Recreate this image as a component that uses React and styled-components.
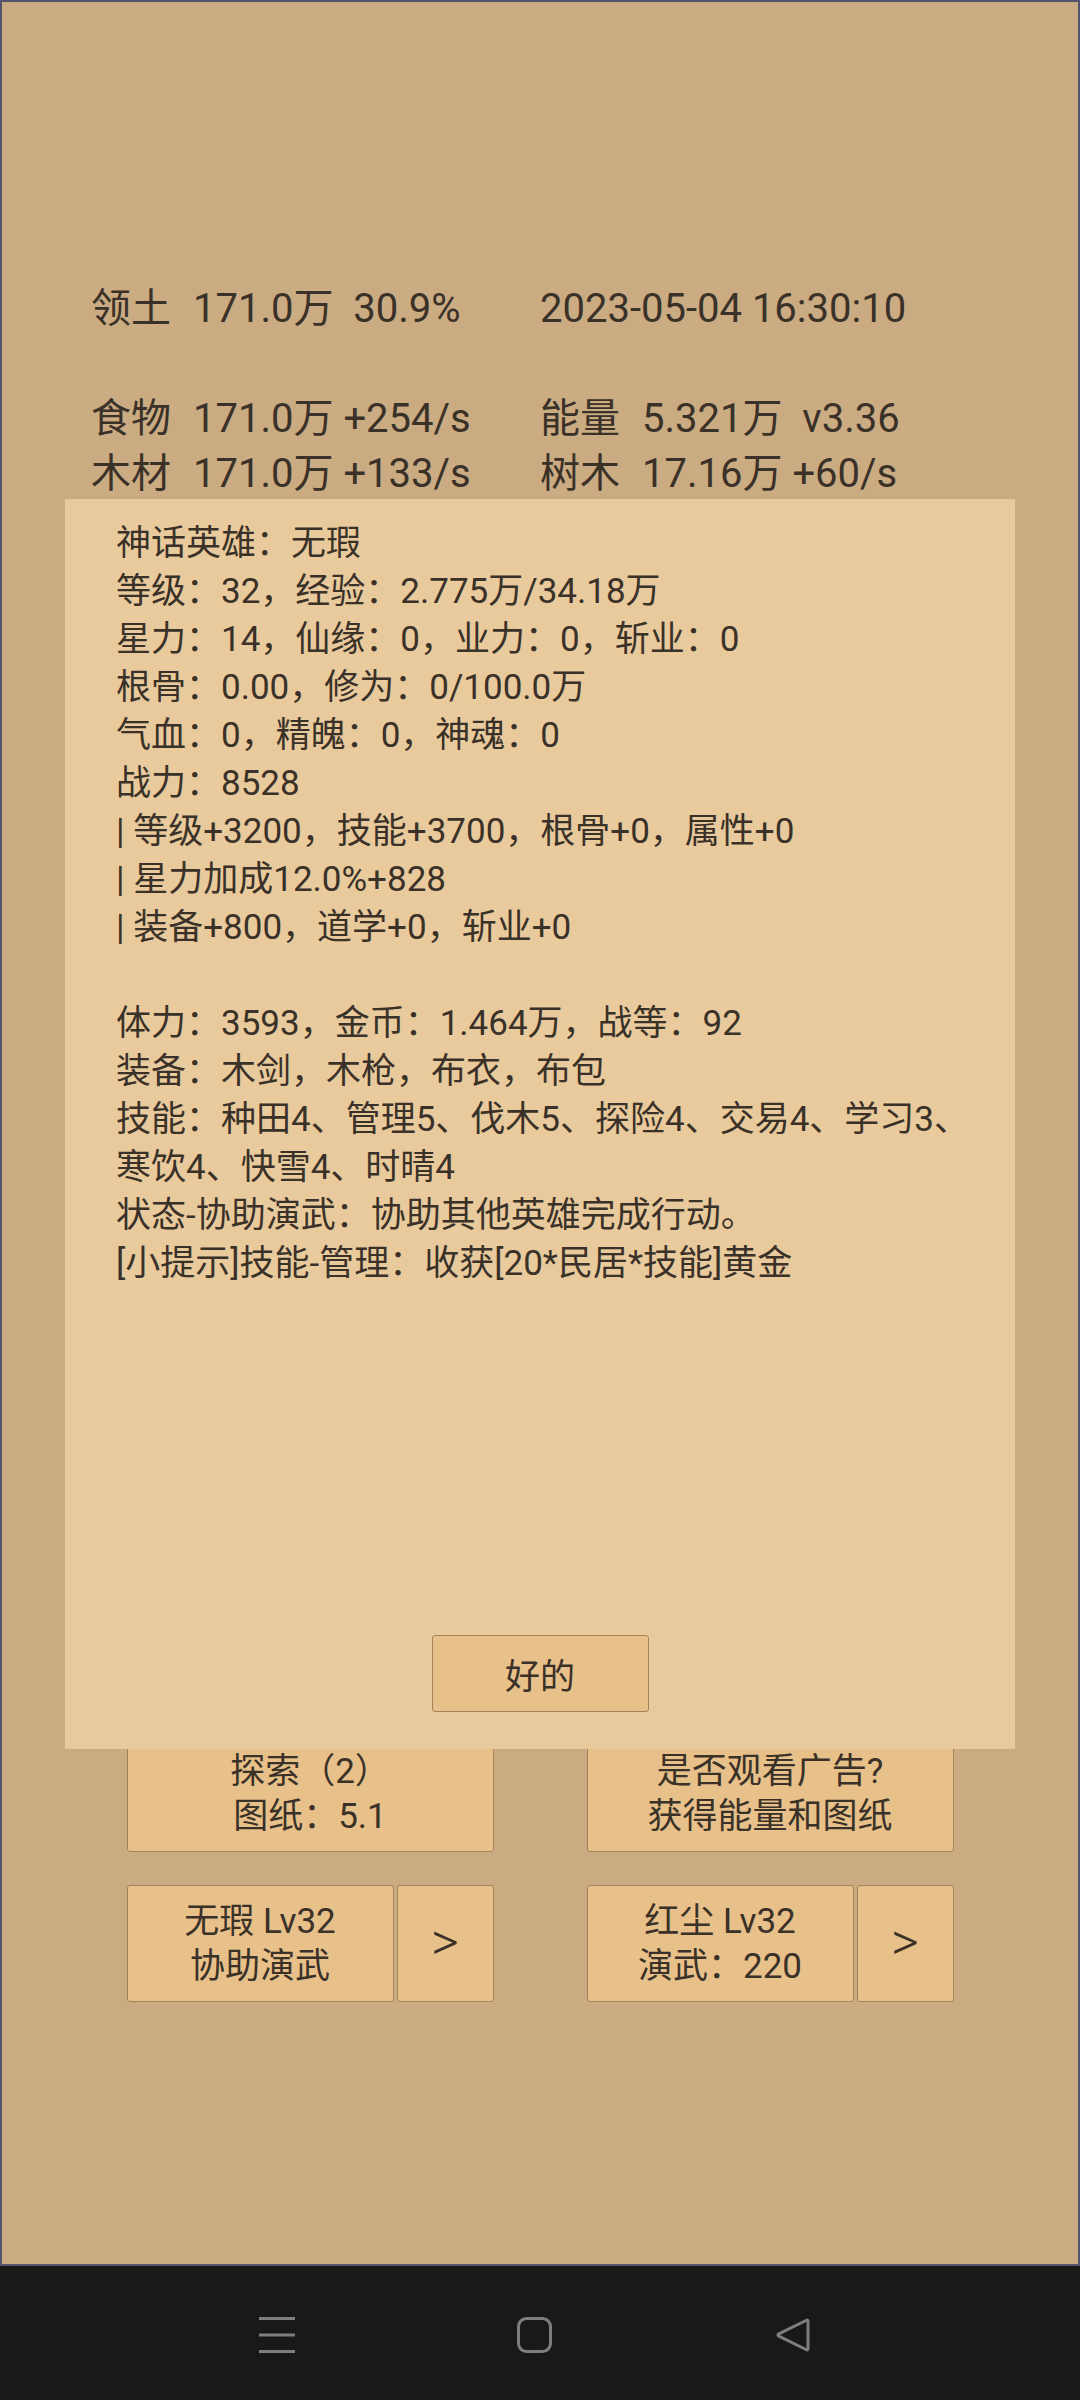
import React from 'react';
import styled, { createGlobalStyle } from 'styled-components';

const GlobalStyle = createGlobalStyle`
  html, body {
    margin: 0;
    padding: 0;
    background: #191919;
  }
  * {
    box-sizing: border-box;
  }
`;

const stats = [
  [
    { label: '领土', value: '171.0万  30.9%' },
    { label: '', value: '2023-05-04 16:30:10' },
  ],
  null,
  [
    { label: '食物', value: '171.0万 +254/s' },
    { label: '能量', value: '5.321万  v3.36' },
  ],
  [
    { label: '木材', value: '171.0万 +133/s' },
    { label: '树木', value: '17.16万 +60/s' },
  ],
];

const heroLines = [
  '神话英雄：无瑕',
  '等级：32，经验：2.775万/34.18万',
  '星力：14，仙缘：0，业力：0，斩业：0',
  '根骨：0.00，修为：0/100.0万',
  '气血：0，精魄：0，神魂：0',
  '战力：8528',
  '| 等级+3200，技能+3700，根骨+0，属性+0',
  '| 星力加成12.0%+828',
  '| 装备+800，道学+0，斩业+0',
  '',
  '体力：3593，金币：1.464万，战等：92',
  '装备：木剑，木枪，布衣，布包',
  '技能：种田4、管理5、伐木5、探险4、交易4、学习3、寒饮4、快雪4、时晴4',
  '状态-协助演武：协助其他英雄完成行动。',
  '[小提示]技能-管理：收获[20*民居*技能]黄金',
];

const App = () => {
  return (
    <Screen>
      <GlobalStyle />
      <AppFrame>
        <StatsGrid>
          {stats.map((row, i) =>
            row ? (
              row.map((cell, j) => (
                <StatCell key={`${i}-${j}`}>
                  {cell.label && <StatLabel>{cell.label}</StatLabel>}
                  {cell.value}
                </StatCell>
              ))
            ) : (
              <BlankRow key={i} />
            )
          )}
        </StatsGrid>

        <ButtonArea>
          <ButtonRow>
            <GameButton>
              <span>探索（2）</span>
              <span>图纸：5.1</span>
            </GameButton>
            <GameButton>
              <span>是否观看广告?</span>
              <span>获得能量和图纸</span>
            </GameButton>
          </ButtonRow>
          <ButtonRow>
            <HeroGroup>
              <GameButton $grow>
                <span>无瑕 Lv32</span>
                <span>协助演武</span>
              </GameButton>
              <ArrowButton>&gt;</ArrowButton>
            </HeroGroup>
            <HeroGroup>
              <GameButton $grow>
                <span>红尘 Lv32</span>
                <span>演武：220</span>
              </GameButton>
              <ArrowButton>&gt;</ArrowButton>
            </HeroGroup>
          </ButtonRow>
        </ButtonArea>

        <Dialog>
          <DialogText>
            {heroLines.map((line, i) => (
              <DialogLine key={i}>{line || '\u00a0'}</DialogLine>
            ))}
          </DialogText>
          <OkButton>好的</OkButton>
        </Dialog>
      </AppFrame>

      <NavBar>
        <NavIcon viewBox="0 0 36 36">
          <path d="M0 1.5H36M0 18H36M0 34.5H36" stroke="#7e7e7e" strokeWidth="3" fill="none" />
        </NavIcon>
        <NavIcon viewBox="0 0 36 36">
          <rect x="1.5" y="1.5" width="32" height="33" rx="8" stroke="#7e7e7e" strokeWidth="3" fill="none" />
        </NavIcon>
        <NavIcon viewBox="0 0 36 36">
          <path
            d="M31 3.5 Q33 2.2 33 4.5 V31.5 Q33 33.8 31 32.5 L3.8 19.2 Q2 18 3.8 16.8 Z"
            stroke="#7e7e7e"
            strokeWidth="3"
            fill="none"
            strokeLinejoin="round"
          />
        </NavIcon>
      </NavBar>
    </Screen>
  );
};

// --- Styled Components ---

const Screen = styled.div`
  width: 1080px;
  height: 2400px;
  display: flex;
  flex-direction: column;
  font-family: Roboto, 'Noto Sans CJK SC', sans-serif;
  color: #3a3128;
`;

const AppFrame = styled.div`
  position: relative;
  height: 2266px;
  background: #caab82;
  border: 2px solid #51546c;
  padding-top: 279px;
  overflow: hidden;
`;

const StatsGrid = styled.div`
  display: grid;
  grid-template-columns: 449px 1fr;
  padding-left: 89px;
  font-size: 40px;
  line-height: 55px;
`;

const StatCell = styled.div`
  white-space: pre;
`;

const StatLabel = styled.span`
  margin-right: 22px;
`;

const BlankRow = styled.div`
  grid-column: 1 / -1;
  height: 55px;
`;

const ButtonArea = styled.div`
  margin-top: 1234px;
  display: flex;
  flex-direction: column;
  gap: 33px;
`;

const ButtonRow = styled.div`
  display: flex;
  justify-content: center;
  gap: 93px;
`;

const HeroGroup = styled.div`
  width: 367px;
  display: flex;
  gap: 3px;
`;

const GameButton = styled.div`
  width: ${(p) => (p.$grow ? 'auto' : '367px')};
  flex: ${(p) => (p.$grow ? '1' : 'none')};
  height: 117px;
  background: #e8c089;
  border: 1.5px solid #a3845a;
  border-radius: 3px;
  display: flex;
  flex-direction: column;
  align-items: center;
  justify-content: center;
  font-size: 35px;
  line-height: 45px;
`;

const ArrowButton = styled.div`
  width: 97px;
  height: 117px;
  background: #e8c089;
  border: 1.5px solid #a3845a;
  border-radius: 3px;
  display: flex;
  align-items: center;
  justify-content: center;
  font-size: 54px;
  font-weight: 300;
  padding-bottom: 4px;
`;

const Dialog = styled.div`
  position: absolute;
  left: 63px;
  top: 497px;
  width: 950px;
  height: 1250px;
  background: #e9ca9c;
  display: flex;
  flex-direction: column;
  align-items: center;
  padding: 21px 28px 37px 51px;
`;

const DialogText = styled.div`
  align-self: stretch;
  flex: 1;
  font-size: 35px;
  line-height: 48px;
`;

const DialogLine = styled.div`
  white-space: pre-wrap;
`;

const OkButton = styled.div`
  width: 217px;
  height: 77px;
  margin-right: 23px;
  background: #e8c089;
  border: 1.5px solid #a3845a;
  border-radius: 3px;
  display: flex;
  align-items: center;
  justify-content: center;
  font-size: 35px;
`;

const NavBar = styled.div`
  flex: 1;
  background: #191919;
  display: flex;
  align-items: center;
  justify-content: center;
  gap: 222px;
  padding: 4px 10px 0 0;
`;

const NavIcon = styled.svg`
  width: 36px;
  height: 36px;
  overflow: visible;
`;

export default App;
